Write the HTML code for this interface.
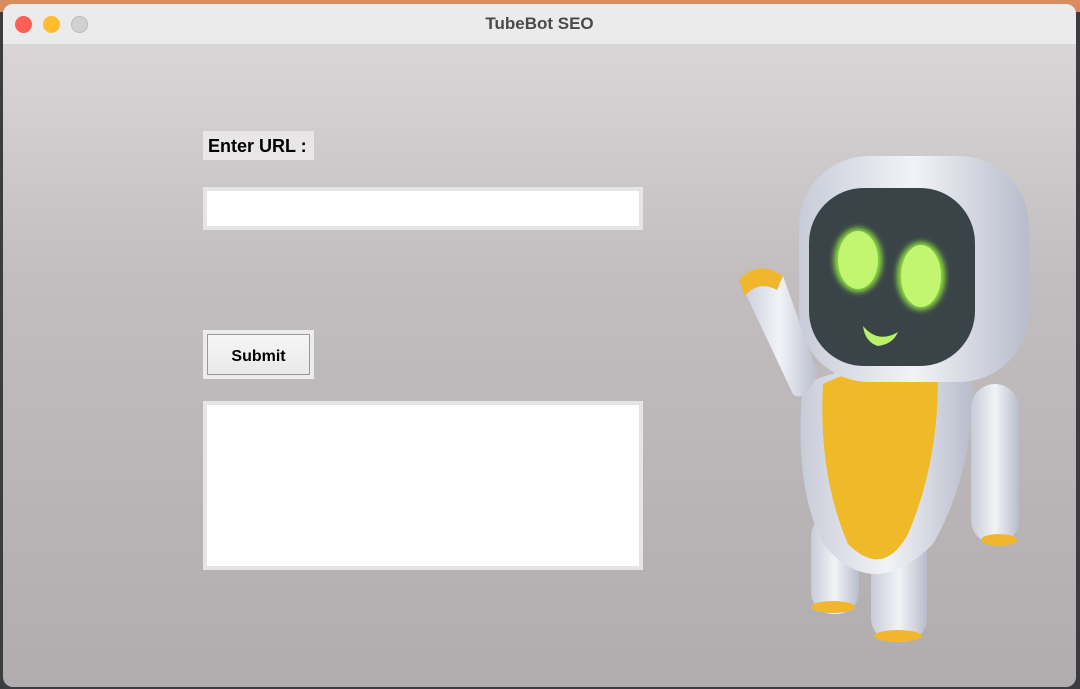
<!DOCTYPE html>
<html><head><style>
body{margin:0;width:1080px;height:689px;overflow:hidden;background:#3a3c40;font-family:"Liberation Sans",sans-serif;position:relative}
.top{position:absolute;left:0;top:0;width:1080px;height:12px;background:#d98d5c}
.win{position:absolute;left:3px;top:4px;width:1073px;height:683px;border-radius:10px;overflow:hidden;background:linear-gradient(#dedadc,#c2bec0 40%,#b1adaf)}
.tb{position:absolute;left:0;top:0;width:100%;height:40px;background:#eaebea;border-bottom:2px solid #d6d6d6}
.tb .t{position:absolute;width:100%;text-align:center;top:10px;font-weight:bold;font-size:17px;color:#4a4a4a}
.d{position:absolute;top:12px;width:17px;height:17px;border-radius:50%}
.lbl{position:absolute;left:200px;top:127px;width:111px;height:29px;background:#e8e6e7;font-weight:bold;font-size:18px;line-height:30px;padding-left:5px;box-sizing:border-box}
.inp{position:absolute;background:#fff;border:4px solid #e6e5e6;box-sizing:border-box}
.btn{position:absolute;left:200px;top:326px;width:111px;height:49px;background:#ececec;box-sizing:border-box;padding:4px}
.btn div{width:100%;height:100%;border:1px solid #999;box-sizing:border-box;background:linear-gradient(#f6f6f6,#e9e9e9);text-align:center;font-weight:bold;font-size:16px;line-height:44px}
</style></head><body>
<div class="top"></div>
<div class="win">
<div class="tb"><div class="d" style="left:12px;background:#fe5f57"></div><div class="d" style="left:40px;background:#febc2e"></div><div class="d" style="left:68px;background:#d1d1d1;border:1px solid #bbb;width:15px;height:15px"></div><div class="t">TubeBot SEO</div></div>
<div class="lbl">Enter URL :</div>
<div class="inp" style="left:200px;top:183px;width:440px;height:43px"></div>
<div class="btn"><div>Submit</div></div>
<div class="inp" style="left:200px;top:397px;width:440px;height:169px"></div>
<svg style="position:absolute;left:0;top:0" width="1073" height="683">
<defs><linearGradient id="w" x1="0" x2="1"><stop offset="0" stop-color="#c8ccd8"/><stop offset=".5" stop-color="#f2f3f7"/><stop offset="1" stop-color="#b8bccb"/></linearGradient>
<filter id="g"><feGaussianBlur stdDeviation="3"/></filter></defs>
<rect x="808" y="510" width="48" height="100" rx="22" fill="url(#w)"/>
<rect x="868" y="520" width="56" height="118" rx="24" fill="url(#w)"/>
<ellipse cx="830" cy="603" rx="22" ry="6" fill="#f0b62e"/>
<ellipse cx="895" cy="632" rx="24" ry="6" fill="#f0b62e"/>
<path d="M800 380 Q790 480 820 540 Q870 600 930 540 Q970 470 970 380 Q900 340 800 380Z" fill="url(#w)"/>
<path d="M820 380 Q815 470 845 540 Q880 575 905 530 Q935 460 935 375 Q880 350 820 380Z" fill="#efb928"/>
<rect x="968" y="380" width="48" height="160" rx="24" fill="url(#w)"/>
<ellipse cx="996" cy="536" rx="18" ry="6" fill="#f0b62e"/>
<path d="M738 280 Q755 255 780 272 L815 370 Q800 400 790 390 Z" fill="url(#w)"/>
<path d="M736 276 Q755 255 780 272 L774 286 Q755 276 742 292Z" fill="#f0b62e"/>
<rect x="796" y="152" width="230" height="226" rx="70" fill="url(#w)"/>
<rect x="806" y="184" width="166" height="178" rx="55" fill="#3a4448"/>
<ellipse cx="855" cy="256" rx="24" ry="32" fill="#8ee040" filter="url(#g)"/>
<ellipse cx="918" cy="272" rx="24" ry="34" fill="#8ee040" filter="url(#g)"/>
<ellipse cx="855" cy="256" rx="20" ry="29" fill="#c2f570"/>
<ellipse cx="918" cy="272" rx="20" ry="31" fill="#c2f570"/>
<path d="M860 322 Q875 340 895 328 Q890 340 875 342 Q862 338 860 322Z" fill="#b9f26a"/>
</svg>
</div>
</body></html>
